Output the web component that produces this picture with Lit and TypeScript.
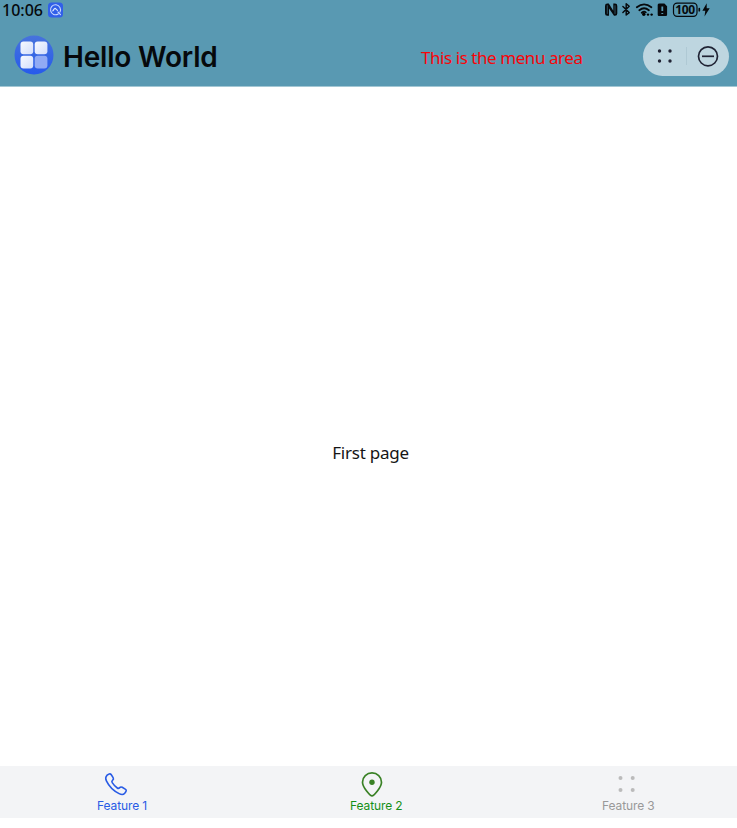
import { LitElement, html, css, svg } from "lit";
import { customElement } from "lit/decorators.js";

const fourDots = (coords: number[][], r: number) =>
  coords.map(([x, y]) => svg`<circle cx=${x} cy=${y} r=${r} fill="currentColor"></circle>`);

@customElement("app-root")
export class AppRoot extends LitElement {
  static styles = css`
    :host {
      display: flex;
      flex-direction: column;
      box-sizing: border-box;
      width: 737px;
      height: 828px;
      padding-bottom: 10px;
      background: #fff;
      color: #06090c;
      font-family: Inter, "Noto Sans", sans-serif;
      overflow: hidden;
      white-space: nowrap;
    }
    svg { display: block; flex: none; }
    .top { background: #5999b2; height: 86px; border-bottom: 1px solid #a3c7d4; flex: none; }
    .status { display: flex; height: 20px; align-items: center; padding: 0 26px 0 2px; }
    .time { width: 46px; font: 500 16px/20px "Noto Sans", sans-serif; letter-spacing: 0; }
    .signals { margin-left: auto; }
    .title-bar { display: flex; align-items: center; height: 66px; padding: 0 8px 0 14px; }
    .logo { margin-top: 4px; }
    h1 { margin: 7px 0 0 9px; width: 358px; font-size: 28px; line-height: 36px; font-weight: 600; letter-spacing: -0.2px; }
    .menu { color: #f80509; font: 400 17px/24px "Noto Sans", sans-serif; letter-spacing: -0.44px; margin-top: 9px; }
    .capsule {
      display: flex; align-items: center; box-sizing: border-box;
      width: 86px; height: 39px; border-radius: 20px; margin: 7px 0 0 auto;
      background: #bed6e0; color: #202334;
    }
    .page {
      flex: 1; display: flex; align-items: center; justify-content: center;
      font: 400 17px/24px "Noto Sans", sans-serif; letter-spacing: -0.25px; padding: 53px 0 0 4px; color: #151515;
    }
    nav { display: flex; height: 52px; background: #f3f4f6; flex: none; padding-right: 1px; }
    .tab { display: flex; flex-direction: column; font-size: 12px; line-height: 15px; letter-spacing: -0.1px; }
    .tab svg { margin-top: 4px; }
    .one { color: #285be5; padding-left: 97px; box-sizing: border-box; width: 350px; }
    .two { color: #159016; width: 252px; }
    .three { color: #999; width: 134px; }
    .one svg { margin-left: 6px; }
    .two svg { margin-left: 9px; color: #398125; }
    .three svg { margin-left: 12px; color: #bbb; }
  `;

  render() {
    return html`
      <header class="top">
        <div class="status">
          <span class="time">10:06</span>
          <svg width="15" height="16" viewBox="0 0 15 16">
            <rect y="0.5" width="15" height="15" rx="3.5" fill="#315fe9"></rect>
            <path d="M10.2 12A5 5 0 1 1 12 10M10 10l2.500 2.600" fill="none" stroke="#c9d8ff" stroke-width="1.100" stroke-linecap="round"></path>
            <path d="M4.300 9c1.400 0 1.500-2.600 2.700-2.600s1.200 2.100 3 2" fill="none" stroke="#dfe8ff" stroke-width="1.200"></path>
          </svg>
          <svg class="signals" width="107" height="20" viewBox="604 0 107 20">
            <path d="M608.800 3.600h-1.500q-2.300 0-2.300 2.300v7.500q0 2.300 2.300 2.300h1.700V8.500l5 7.200h1q2.300 0 2.300-2.300V5.900q0-2.300-2.300-2.300h-1.700v7.200z" fill="#06090c"></path>
            <path d="M607.300 5.300v8.600M615 5.300v8.600" stroke="#5999b2" stroke-width="0.500"></path>
            <g fill="none" stroke="#06090c" stroke-linecap="round" stroke-linejoin="round">
              <path d="M622.900 6.500l6.300 6.100-3 2.400V3.700l3 2.500-6.300 6.400" stroke-width="1.450"></path>
              <path d="M636.800 7.300q7.300-5.900 14.600 0M639.300 10.200q4.800-3.800 9.600 0" stroke-width="1.800"></path>
              <path d="M641.700 12.700q2.400-1.700 4.100-.3" stroke-width="1.800"></path>
              <rect x="673.500" y="3.100" width="23.500" height="13.300" rx="3.600" stroke-width="1.200"></rect>
              <path d="M699.300 8.700v2" stroke-width="1.700"></path>
            </g>
            <circle cx="643.800" cy="14.300" r="1.700"></circle>
            <circle cx="648" cy="14.600" r="1.200"></circle>
            <circle cx="651.600" cy="14.600" r="1.200"></circle>
            <path d="M659.700 3.500h4.700l2.700 2.700v8.600q0 1.300-1.300 1.300h-6.900q-1.200 0-1.200-1.300V4.700q0-1.200 2-1.200z" fill="#06090c"></path>
            <path d="M662.300 6.500v4.500M662.300 13v1" stroke="#5999b2" stroke-width="1.800"></path>
            <text x="685.200" y="14.200" text-anchor="middle" font-family="Noto Sans" font-size="12" font-weight="700" textLength="20" fill="#06090c">100</text>
            <path d="M706.700 3.200l-4.300 7.500h2.900l-.8 5.700 5.200-8.100h-3z" fill="#06090c"></path>
          </svg>
        </div>
        <div class="title-bar">
          <svg class="logo" width="40" height="40" viewBox="0 0 40 40">
            <defs>
              <linearGradient id="disc" x1="0" y1="0" x2="0" y2="1">
                <stop stop-color="#4773dc"></stop><stop offset="1" stop-color="#265aec"></stop>
              </linearGradient>
              <linearGradient id="tile" x1="0" y1="0" x2="1" y2="1">
                <stop stop-color="#f7f9ff"></stop><stop offset="1" stop-color="#d3defb"></stop>
              </linearGradient>
            </defs>
            <circle cx="20" cy="20" r="19.500" fill="url(#disc)"></circle>
            <g fill="url(#tile)">
              <rect x="6.500" y="6.500" width="12.700" height="12.700" rx="3"></rect>
              <rect x="20.700" y="6.500" width="12.700" height="12.700" rx="3"></rect>
              <rect x="6.500" y="20.700" width="12.700" height="12.700" rx="3"></rect>
            </g>
            <rect x="20.700" y="20.700" width="12.700" height="12.700" rx="3" fill="#91aaf4"></rect>
          </svg>
          <h1>Hello World</h1>
          <span class="menu">This is the menu area</span>
          <div class="capsule">
            <svg width="86" height="39" viewBox="0 0 86 39">
              ${fourDots([[16.500, 14], [27, 14], [16.500, 24], [27, 24]], 1.700)}
              <path d="M43.500 10v18" stroke="#afc9d4"></path>
              <circle cx="65" cy="19.300" r="9.500" fill="none" stroke="currentColor" stroke-width="1.700"></circle>
              <path d="M59 19.300h12" stroke="currentColor" stroke-width="1.700"></path>
            </svg>
          </div>
        </div>
      </header>
      <main class="page">First page</main>
      <nav>
        <div class="tab one">
          <svg width="26" height="28" viewBox="0 0 26 28">
            <path d="M4 5.200L5.800 4.100Q7.300 3.300 8.300 4.800L10.100 7.600Q11 9.100 9.700 10.100Q8.300 11.300 9.200 12.600Q11.200 15.700 14.300 18Q15.500 18.900 16.700 17.600Q17.700 16.500 19.200 17.300L22.200 19.100Q23.900 20.200 22.800 21.700L21.700 23.200Q19.800 25.500 16.100 23.600C10.900 21.100 5.900 16.100 3.400 10.900Q1.800 7.500 4 5.200Z" fill="none" stroke="currentColor" stroke-width="1.600" stroke-linejoin="round"></path>
          </svg>
          <span>Feature 1</span>
        </div>
        <div class="tab two">
          <svg width="26" height="28" viewBox="0 0 26 28">
            <path d="M13 25.900C11.300 25.900 3.500 17.400 3.500 12.200A9.500 9.300 0 0 1 22.500 12.200C22.500 17.400 14.700 25.900 13 25.900Z" fill="none" stroke="currentColor" stroke-width="1.700"></path>
            <circle cx="13" cy="12.300" r="2.700" fill="currentColor"></circle>
          </svg>
          <span>Feature 2</span>
        </div>
        <div class="tab three">
          <svg width="26" height="28" viewBox="0 0 26 28">
            ${fourDots([[6.500, 8], [18.700, 8], [6.500, 20], [18.700, 20]], 2)}
          </svg>
          <span>Feature 3</span>
        </div>
      </nav>
    `;
  }
}
